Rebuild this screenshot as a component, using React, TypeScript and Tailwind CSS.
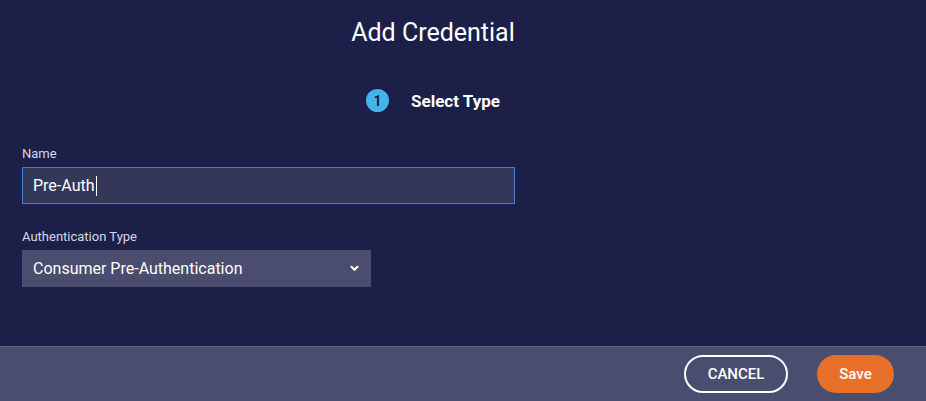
import React from 'react'

const font = { fontFamily: 'Roboto, "Liberation Sans", sans-serif' }

const Field = ({ label, children }: { label: string; children: React.ReactNode }) => (
  <div className="flex flex-col">
    <label className="text-[13px] text-[#d6d8e4] leading-4 mb-[5px]">{label}</label>
    {children}
  </div>
)

export default function App() {
  return (
    <div className="w-[926px] h-[401px] flex flex-col bg-[#1c2048] text-white" style={font}>
      <div className="flex-1 flex flex-col">
        <div className="w-[866px] text-center pt-[17px]">
          <h1 className="text-[25px] leading-8 text-white">Add Credential</h1>
          <div className="mt-[40px] flex items-center justify-center gap-[22px]">
            <span className="w-[23px] h-[23px] rounded-full bg-[#41b5eb] text-[#1c2048] text-[14px] font-bold flex items-center justify-center leading-none">
              1
            </span>
            <span className="text-[17px] font-bold leading-5">Select Type</span>
          </div>
        </div>
        <div className="px-[22px] mt-[34px] flex flex-col gap-[25px]">
          <Field label="Name">
            <div className="w-[493px] h-[37px] bg-[#343757] border border-[#4f79d8] flex items-center px-[10px] text-[16px]">
              <span>Pre-Auth</span>
              <span className="w-px h-[20px] bg-white ml-[1px]" />
            </div>
          </Field>
          <Field label="Authentication Type">
            <div className="w-[349px] h-[37px] bg-[#4a4d6e] flex items-center justify-between pl-[11px] pr-[12px] text-[16px]">
              <span>Consumer Pre-Authentication</span>
              <svg width="9" height="7" viewBox="0 0 9 7" fill="none">
                <path d="M1.5 1.8l3 3 3-3" stroke="white" strokeWidth="2.2" strokeLinecap="round" strokeLinejoin="round" />
              </svg>
            </div>
          </Field>
        </div>
      </div>
      <div className="h-[55px] bg-[#4a4e6e] border-t border-[#5e6283] flex items-center justify-end gap-[29px] pr-[32px]">
        <button className="w-[104px] h-[38px] rounded-full border-2 border-white text-[15px] font-medium">
          CANCEL
        </button>
        <button className="w-[77px] h-[38px] rounded-full bg-[#e86f27] text-[15px] font-medium">
          Save
        </button>
      </div>
    </div>
  )
}
